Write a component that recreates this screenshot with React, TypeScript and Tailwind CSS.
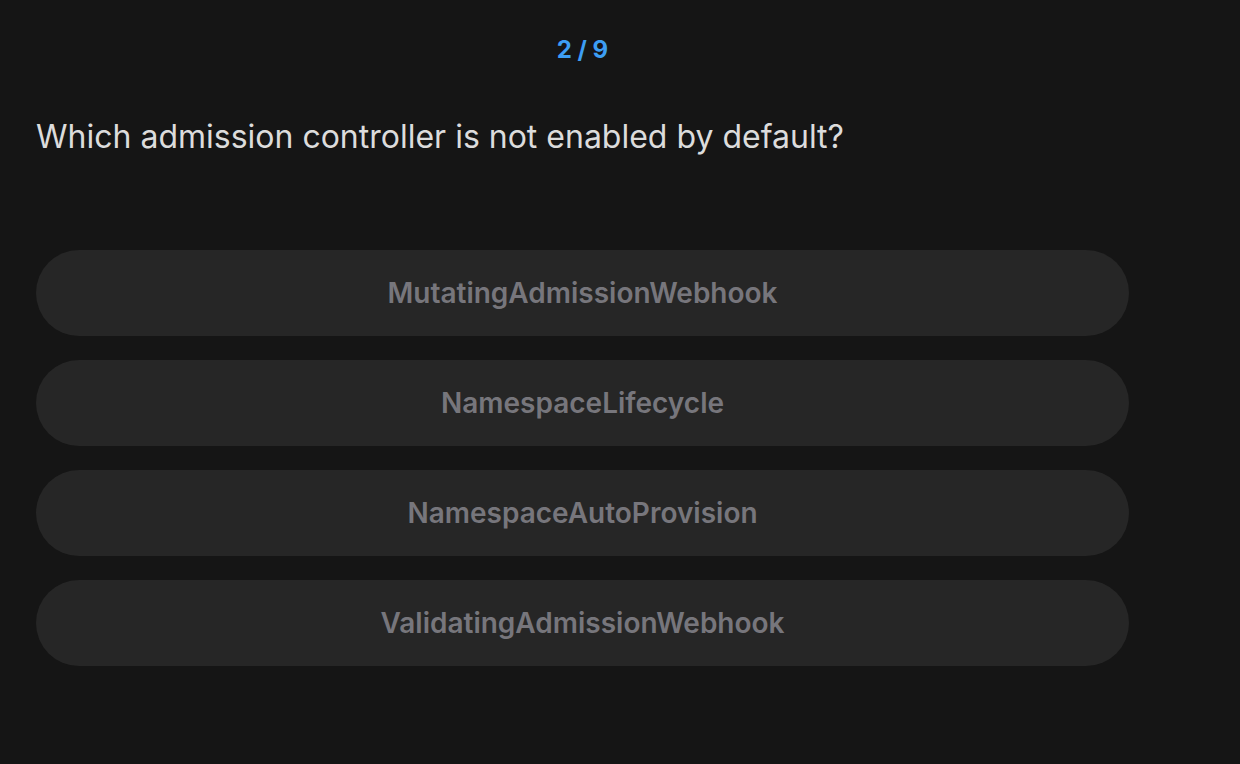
import React from 'react';

const options = [
  'MutatingAdmissionWebhook',
  'NamespaceLifecycle',
  'NamespaceAutoProvision',
  'ValidatingAdmissionWebhook',
];

const App = () => {
  return (
    <div className="min-h-[764px] w-full bg-[#151515] font-['Inter',sans-serif]">
      <div className="w-[1093px] ml-[36px] pt-[36px]">
        <div className="text-center text-[24px] font-bold text-[#3d9ef4] leading-[28px]">2 / 9</div>
        <h1 className="mt-[53px] text-[32px] font-normal text-[#dcdcdc] leading-[40px]">
          Which admission controller is not enabled by default?
        </h1>
        <div className="mt-[93px] flex flex-col gap-[24px]">
          {options.map((opt) => (
            <button
              key={opt}
              className="h-[86px] w-full rounded-full bg-[#262626] text-[28px] font-semibold text-[#77767c]"
            >
              {opt}
            </button>
          ))}
        </div>
      </div>
    </div>
  );
};

export default App;
